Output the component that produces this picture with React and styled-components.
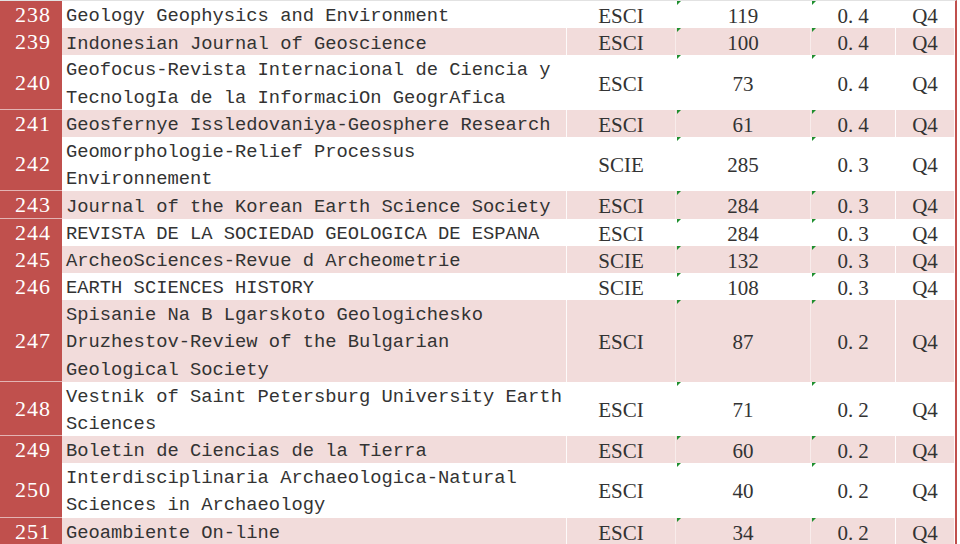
import React from "react";
import styled, { createGlobalStyle } from "styled-components";

const GlobalStyle = createGlobalStyle`
  html, body {
    margin: 0;
    padding: 0;
    background: #fff;
  }
`;

const LINE = 27.2;

const Sheet = styled.div`
  width: 957px;
  border-top: 1px solid #e2e2e2;
  border-right: 2px solid #c0504d;
  box-sizing: border-box;
`;

const Row = styled.div`
  display: grid;
  grid-template-columns: 62px 505px 109px 135px 85px 59px;
  height: ${(p) => p.$lines * LINE}px;
  background-color: ${(p) => (p.$striped ? "#f2dcdb" : "#ffffff")};
  color: #333;
`;

const IndexCell = styled.div`
  display: flex;
  align-items: center;
  justify-content: flex-end;
  padding-right: 11px;
  padding-top: 1px;
  background-color: #c0504d;
  border-bottom: 1px solid #e3b4b3;
  color: #fff;
  font-family: "Liberation Serif", serif;
  font-size: 22px;
  letter-spacing: 1px;
  box-sizing: border-box;
`;

const NameCell = styled.div`
  display: flex;
  flex-direction: column;
  justify-content: center;
  padding-left: 4px;
  padding-top: 4px;
  font-family: "Liberation Mono", monospace;
  font-size: 18.8px;
  line-height: ${LINE}px;
  white-space: nowrap;
  border-right: 1px solid rgba(255, 255, 255, 0.85);
  overflow: hidden;
  box-sizing: border-box;
`;

const Cell = styled.div`
  position: relative;
  display: flex;
  align-items: center;
  justify-content: center;
  padding-top: 3px;
  font-family: "Liberation Serif", serif;
  font-size: 21px;
  border-right: 1px solid rgba(255, 255, 255, ${(p) => (p.$faint ? 0.45 : 0.9)});
  box-sizing: border-box;
  ${(p) =>
    p.$flag &&
    `
    &::before {
      content: "";
      position: absolute;
      top: 0;
      left: 1px;
      border-top: 4px solid #1f8f2f;
      border-right: 4px solid transparent;
    }
  `}
`;

const Dot = styled.span`
  margin-right: 5px;
`;

const journals = [
  [238, ["Geology Geophysics and Environment"], "ESCI", 119, "0.4"],
  [239, ["Indonesian Journal of Geoscience"], "ESCI", 100, "0.4"],
  [240, ["Geofocus-Revista Internacional de Ciencia y", "TecnologIa de la InformaciOn GeogrAfica"], "ESCI", 73, "0.4"],
  [241, ["Geosfernye Issledovaniya-Geosphere Research"], "ESCI", 61, "0.4"],
  [242, ["Geomorphologie-Relief Processus", "Environnement"], "SCIE", 285, "0.3"],
  [243, ["Journal of the Korean Earth Science Society"], "ESCI", 284, "0.3"],
  [244, ["REVISTA DE LA SOCIEDAD GEOLOGICA DE ESPANA"], "ESCI", 284, "0.3"],
  [245, ["ArcheoSciences-Revue d Archeometrie"], "SCIE", 132, "0.3"],
  [246, ["EARTH SCIENCES HISTORY"], "SCIE", 108, "0.3"],
  [247, ["Spisanie Na B Lgarskoto Geologichesko", "Druzhestov-Review of the Bulgarian", "Geological Society"], "ESCI", 87, "0.2"],
  [248, ["Vestnik of Saint Petersburg University Earth", "Sciences"], "ESCI", 71, "0.2"],
  [249, ["Boletin de Ciencias de la Tierra"], "ESCI", 60, "0.2"],
  [250, ["Interdisciplinaria Archaeologica-Natural", "Sciences in Archaeology"], "ESCI", 40, "0.2"],
  [251, ["Geoambiente On-line"], "ESCI", 34, "0.2"],
];

export default function App() {
  return (
    <>
      <GlobalStyle />
      <Sheet>
        {journals.map(([rank, name, index, count, impact], i) => {
          const [whole, frac] = impact.split(".");
          return (
            <Row key={rank} $lines={name.length} $striped={i % 2 === 1}>
              <IndexCell>{rank}</IndexCell>
              <NameCell>
                {name.map((line) => (
                  <span key={line}>{line}</span>
                ))}
              </NameCell>
              <Cell $faint>{index}</Cell>
              <Cell $flag $faint>
                {count}
              </Cell>
              <Cell $flag>
                {whole}
                <Dot>.</Dot>
                {frac}
              </Cell>
              <Cell>Q4</Cell>
            </Row>
          );
        })}
      </Sheet>
    </>
  );
}
